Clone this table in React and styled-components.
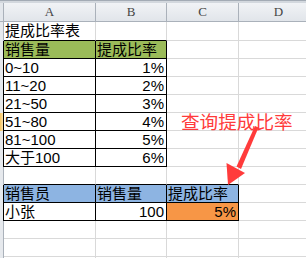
import React from 'react';
import styled, { createGlobalStyle } from 'styled-components';

const GlobalStyle = createGlobalStyle`
  html, body { margin: 0; padding: 0; background: #fff; overflow: hidden; }
  body { font-family: "Liberation Sans", "Noto Sans CJK SC", sans-serif; }
`;

const GRID = '#d9d9d9';
const HEAD_LINE = '#aab1ba';
const INK = '#000';

const fills = { green: '#9bbb59', blue: '#8db4e2', orange: '#f79646' };

const cols = ['A', 'B', 'C', 'D'];

// sheet contents, one array per row (A..D)
const rows = [
  [{ text: '提成比率表' }, {}, {}, {}],
  [{ text: '销售量', fill: 'green', box: true }, { text: '提成比率', fill: 'green', box: true }, {}, {}],
  [{ text: '0~10', box: true }, { text: '1%', align: 'right', box: true }, {}, {}],
  [{ text: '11~20', box: true }, { text: '2%', align: 'right', box: true }, {}, {}],
  [{ text: '21~50', box: true }, { text: '3%', align: 'right', box: true }, {}, {}],
  [{ text: '51~80', box: true }, { text: '4%', align: 'right', box: true }, {}, {}],
  [{ text: '81~100', box: true }, { text: '5%', align: 'right', box: true }, {}, {}],
  [{ text: '大于100', box: true }, { text: '6%', align: 'right', box: true }, {}, {}],
  [{}, {}, {}, {}],
  [
    { text: '销售员', fill: 'blue', box: true },
    { text: '销售量', fill: 'blue', box: true },
    { text: '提成比率', fill: 'blue', box: true },
    {},
  ],
  [
    { text: '小张', box: true },
    { text: '100', align: 'right', box: true },
    { text: '5%', align: 'right', fill: 'orange', box: true },
    {},
  ],
  [{}, {}, {}, {}],
  [{}, {}, {}, {}],
  [{}, {}, {}, {}],
];

const boxed = (r, c) => Boolean(rows[r] && rows[r][c] && rows[r][c].box);

const Page = styled.div`
  position: relative;
  width: 306px;
  height: 258px;
  overflow: hidden;
`;

const Sheet = styled.div`
  display: grid;
  grid-template-columns: 4px 92px 71px 72px 80px;
  grid-template-rows: 3px 19px 19px repeat(13, 18px);
`;

const Band = styled.div`
  grid-column: 1 / -1;
  box-sizing: border-box;
  border-top: 1px solid #a3abb5;
  background: #d3d8de;
`;

const Corner = styled.div`
  box-sizing: border-box;
  border-right: 1px solid ${HEAD_LINE};
  border-bottom: 1px solid ${HEAD_LINE};
  background: #e3e7ec;
`;

const ColHead = styled.div`
  box-sizing: border-box;
  border-right: 1px solid ${HEAD_LINE};
  border-bottom: 1px solid ${HEAD_LINE};
  background: linear-gradient(#f1f3f6, #e1e5ea);
  display: flex;
  align-items: center;
  justify-content: center;
  font-family: "Liberation Serif", serif;
  font-size: 13px;
  color: #444;
`;

const RowHead = styled.div`
  box-sizing: border-box;
  border-right: 1px solid ${p => (p.$edge ? INK : HEAD_LINE)};
  background: ${p => (p.$active ? 'linear-gradient(90deg, #f7c35c, #fbe0a8)' : '#e6e9ed')};
`;

const Cell = styled.div`
  box-sizing: border-box;
  border-right: 1px solid ${p => (p.$edgeR ? INK : GRID)};
  border-bottom: 1px solid ${p => (p.$edgeB ? INK : GRID)};
  background: ${p => p.$fill || '#fff'};
  text-align: ${p => p.$align || 'left'};
  padding: 0 2px 0 1px;
  font-size: 15px;
  line-height: 17px;
  color: #000;
  white-space: nowrap;
  overflow: hidden;
`;

const Callout = styled.div`
  position: absolute;
  left: 181px;
  top: 111px;
  font-family: "Noto Sans CJK SC", sans-serif;
  font-size: 18.6px;
  line-height: 19px;
  color: #ff3b3b;
  white-space: nowrap;
`;

const Arrow = styled.svg`
  position: absolute;
  left: 0;
  top: 0;
  pointer-events: none;
`;

export default function App() {
  return (
    <Page>
      <GlobalStyle />
      <Sheet>
        <Band />
        <Corner />
        {cols.map(c => (
          <ColHead key={c}>{c}</ColHead>
        ))}
        {rows.map((row, r) => (
          <React.Fragment key={r}>
            <RowHead $edge={boxed(r, 0)} $active={r === 5} />
            {row.map((cell, c) => (
              <Cell
                key={c}
                $fill={fills[cell.fill]}
                $align={cell.align}
                $edgeR={boxed(r, c) || boxed(r, c + 1)}
                $edgeB={boxed(r, c) || boxed(r + 1, c)}
              >
                {cell.text}
              </Cell>
            ))}
          </React.Fragment>
        ))}
      </Sheet>
      <Callout>查询提成比率</Callout>
      <Arrow width="306" height="258" viewBox="0 0 306 258">
        <polygon points="255,126 258.5,127.5 241,169 236.5,166.5" fill="#ff3b3b" />
        <polygon points="226.5,163 245,173 228,185" fill="#ff3b3b" />
      </Arrow>
    </Page>
  );
}
